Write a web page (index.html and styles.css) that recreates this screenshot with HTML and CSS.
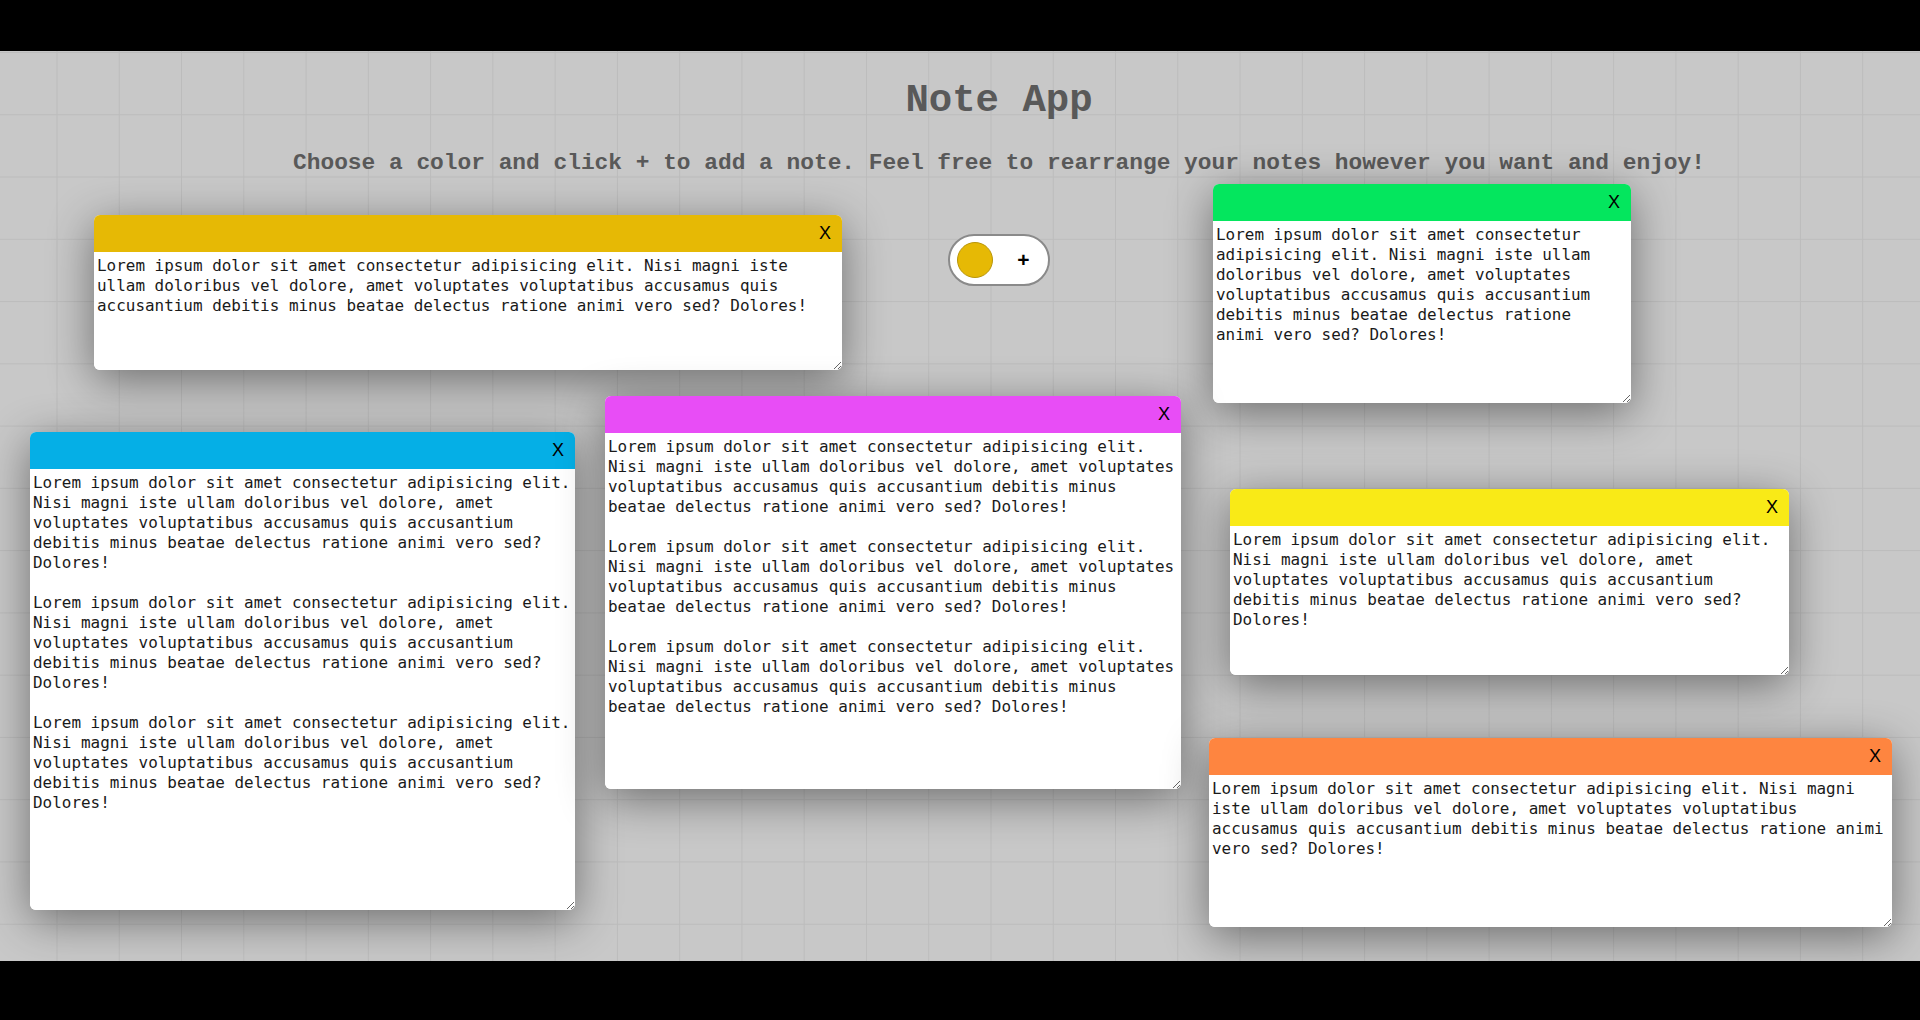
FILE: index.html
```html
<!DOCTYPE html>
<html lang="en">
<head>
<meta charset="utf-8">
<title>Note App</title>
<link rel="stylesheet" href="styles.css">
</head>
<body>
<div class="app">
  <header class="intro">
    <h1 class="title">Note App</h1>
    <p class="subtitle">Choose a color and click + to add a note. Feel free to rearrange your notes however you want and enjoy!</p>
    <div class="picker-row">
      <div class="picker">
        <span class="swatch"></span>
        <button class="add" type="button">+</button>
      </div>
    </div>
  </header>

  <div class="note n-gold">
    <div class="note-head"><span class="close">X</span></div>
    <textarea class="note-body" spellcheck="false">Lorem ipsum dolor sit amet consectetur adipisicing elit. Nisi magni iste ullam doloribus vel dolore, amet voluptates voluptatibus accusamus quis accusantium debitis minus beatae delectus ratione animi vero sed? Dolores!</textarea>
  </div>

  <div class="note n-green">
    <div class="note-head"><span class="close">X</span></div>
    <textarea class="note-body" spellcheck="false">Lorem ipsum dolor sit amet consectetur adipisicing elit. Nisi magni iste ullam doloribus vel dolore, amet voluptates voluptatibus accusamus quis accusantium debitis minus beatae delectus ratione animi vero sed? Dolores!</textarea>
  </div>

  <div class="note n-blue">
    <div class="note-head"><span class="close">X</span></div>
    <textarea class="note-body" spellcheck="false">Lorem ipsum dolor sit amet consectetur adipisicing elit. Nisi magni iste ullam doloribus vel dolore, amet voluptates voluptatibus accusamus quis accusantium debitis minus beatae delectus ratione animi vero sed? Dolores!

Lorem ipsum dolor sit amet consectetur adipisicing elit. Nisi magni iste ullam doloribus vel dolore, amet voluptates voluptatibus accusamus quis accusantium debitis minus beatae delectus ratione animi vero sed? Dolores!

Lorem ipsum dolor sit amet consectetur adipisicing elit. Nisi magni iste ullam doloribus vel dolore, amet voluptates voluptatibus accusamus quis accusantium debitis minus beatae delectus ratione animi vero sed? Dolores!</textarea>
  </div>

  <div class="note n-magenta">
    <div class="note-head"><span class="close">X</span></div>
    <textarea class="note-body" spellcheck="false">Lorem ipsum dolor sit amet consectetur adipisicing elit. Nisi magni iste ullam doloribus vel dolore, amet voluptates voluptatibus accusamus quis accusantium debitis minus beatae delectus ratione animi vero sed? Dolores!

Lorem ipsum dolor sit amet consectetur adipisicing elit. Nisi magni iste ullam doloribus vel dolore, amet voluptates voluptatibus accusamus quis accusantium debitis minus beatae delectus ratione animi vero sed? Dolores!

Lorem ipsum dolor sit amet consectetur adipisicing elit. Nisi magni iste ullam doloribus vel dolore, amet voluptates voluptatibus accusamus quis accusantium debitis minus beatae delectus ratione animi vero sed? Dolores!</textarea>
  </div>

  <div class="note n-yellow">
    <div class="note-head"><span class="close">X</span></div>
    <textarea class="note-body" spellcheck="false">Lorem ipsum dolor sit amet consectetur adipisicing elit. Nisi magni iste ullam doloribus vel dolore, amet voluptates voluptatibus accusamus quis accusantium debitis minus beatae delectus ratione animi vero sed? Dolores!</textarea>
  </div>

  <div class="note n-orange">
    <div class="note-head"><span class="close">X</span></div>
    <textarea class="note-body" spellcheck="false">Lorem ipsum dolor sit amet consectetur adipisicing elit. Nisi magni iste ullam doloribus vel dolore, amet voluptates voluptatibus accusamus quis accusantium debitis minus beatae delectus ratione animi vero sed? Dolores!</textarea>
  </div>
</div>
</body>
</html>
```

FILE: styles.css
```css
html, body {
  margin: 0;
  padding: 0;
  background: #000;
}

body {
  width: 1920px;
  height: 1020px;
  overflow: hidden;
}

.app {
  position: relative;
  margin-top: 51px;
  height: 910px;
  box-sizing: border-box;
  padding-left: 78px;
  overflow: hidden;
  background-color: #c8c8c8;
  background-image:
    linear-gradient(to right, #bcbcbc 1px, transparent 1px),
    linear-gradient(to bottom, #bcbcbc 1px, transparent 1px);
  background-size: 62.27px 62.27px;
  background-position: 56.5px 1px;
}

.intro {
  text-align: center;
}

.title {
  margin: 28px 0 0;
  font-family: "Liberation Mono", monospace;
  font-weight: bold;
  font-size: 39px;
  line-height: 44px;
  color: #595959;
}

.subtitle {
  margin: 27px 0 0;
  font-family: "Liberation Mono", monospace;
  font-weight: bold;
  font-size: 22.85px;
  line-height: 26px;
  color: #595959;
}

.picker-row {
  margin-top: 58px;
  display: flex;
  justify-content: center;
}

.picker {
  width: 102px;
  height: 52px;
  box-sizing: border-box;
  border: 2px solid #8a8a8a;
  border-radius: 26px;
  background: #fff;
  display: flex;
  align-items: center;
  padding: 0 0 0 7px;
}

.swatch {
  width: 36px;
  height: 36px;
  box-sizing: border-box;
  border-radius: 50%;
  background: #e6b905;
  border: 1px solid #b8950a;
}

.add {
  flex: 1;
  border: none;
  background: none;
  padding: 0 0 2px 6px;
  font-family: "Liberation Sans", Arial, sans-serif;
  font-weight: bold;
  font-size: 21px;
  line-height: 1;
  color: #000;
}

.note {
  position: absolute;
  display: flex;
  flex-direction: column;
  border-radius: 6px;
  overflow: hidden;
  background: #fff;
  box-shadow: 0 10px 45px rgba(0, 0, 0, 0.45);
}

.note-head {
  flex: 0 0 36.5px;
  display: flex;
  align-items: center;
  justify-content: flex-end;
  padding-right: 11px;
  padding-bottom: 1px;
  box-sizing: border-box;
}

.close {
  font-family: "Liberation Sans", Arial, sans-serif;
  font-size: 18px;
  line-height: 1;
  color: #000;
}

.note-body {
  flex: 1;
  width: 100%;
  box-sizing: border-box;
  margin: 0;
  border: none;
  outline: none;
  padding: 4px 3px 0 3px;
  font-family: "DejaVu Sans Mono", monospace;
  font-size: 15.95px;
  line-height: 20px;
  color: #1a1a1a;
  background: #fff;
  resize: both;
  overflow: hidden;
}

.n-gold { left: 94px; top: 164px; width: 748px; height: 155px; }
.n-gold .note-head { background: #e6b905; }

.n-green { left: 1213px; top: 133px; width: 418px; height: 219px; }
.n-green .note-head { background: #04e65e; }

.n-blue { left: 30px; top: 381px; width: 545px; height: 478px; }
.n-blue .note-head { background: #05afe6; }

.n-magenta { left: 605px; top: 345px; width: 576px; height: 393px; }
.n-magenta .note-head { background: #e84df6; }

.n-yellow { left: 1230px; top: 438px; width: 559px; height: 186px; }
.n-yellow .note-head { background: #f9ea17; }

.n-orange { left: 1209px; top: 687px; width: 683px; height: 189px; }
.n-orange .note-head { background: #fe8540; }
```
